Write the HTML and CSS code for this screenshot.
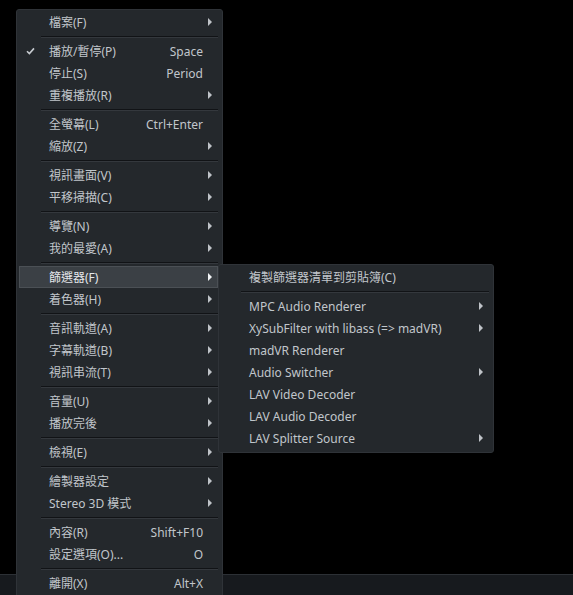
FILE: index.html
```html
<!DOCTYPE html>
<html>
<head>
<meta charset="utf-8">
<link rel="stylesheet" href="styles.css">
</head>
<body>
<div class="screen">
  <div class="statusbar"></div>

  <div class="menu main">
    <div class="item"><span class="label">檔案(F)</span><span class="arrow"></span></div>
    <div class="sep"></div>
    <div class="item"><span class="check"><svg width="9" height="8" viewBox="0 0 9 8"><path d="M1 4.2 L3.4 6.6 L8 1.4" fill="none" stroke="#c6cacf" stroke-width="1.6"/></svg></span><span class="label">播放/暫停(P)</span><span class="key">Space</span></div>
    <div class="item"><span class="label">停止(S)</span><span class="key">Period</span></div>
    <div class="item"><span class="label">重複播放(R)</span><span class="arrow"></span></div>
    <div class="sep"></div>
    <div class="item"><span class="label">全螢幕(L)</span><span class="key">Ctrl+Enter</span></div>
    <div class="item"><span class="label">縮放(Z)</span><span class="arrow"></span></div>
    <div class="sep"></div>
    <div class="item"><span class="label">視訊畫面(V)</span><span class="arrow"></span></div>
    <div class="item"><span class="label">平移掃描(C)</span><span class="arrow"></span></div>
    <div class="sep"></div>
    <div class="item"><span class="label">導覽(N)</span><span class="arrow"></span></div>
    <div class="item"><span class="label">我的最愛(A)</span><span class="arrow"></span></div>
    <div class="sep"></div>
    <div class="item active"><span class="label">篩選器(F)</span><span class="arrow"></span></div>
    <div class="item"><span class="label">着色器(H)</span><span class="arrow"></span></div>
    <div class="sep"></div>
    <div class="item"><span class="label">音訊軌道(A)</span><span class="arrow"></span></div>
    <div class="item"><span class="label">字幕軌道(B)</span><span class="arrow"></span></div>
    <div class="item"><span class="label">視訊串流(T)</span><span class="arrow"></span></div>
    <div class="sep"></div>
    <div class="item"><span class="label">音量(U)</span><span class="arrow"></span></div>
    <div class="item"><span class="label">播放完後</span><span class="arrow"></span></div>
    <div class="sep"></div>
    <div class="item"><span class="label">檢視(E)</span><span class="arrow"></span></div>
    <div class="sep"></div>
    <div class="item"><span class="label">繪製器設定</span><span class="arrow"></span></div>
    <div class="item"><span class="label">Stereo 3D 模式</span><span class="arrow"></span></div>
    <div class="sep"></div>
    <div class="item"><span class="label">內容(R)</span><span class="key">Shift+F10</span></div>
    <div class="item"><span class="label">設定選項(O)...</span><span class="key">O</span></div>
    <div class="sep"></div>
    <div class="item"><span class="label">離開(X)</span><span class="key">Alt+X</span></div>
  </div>

  <div class="menu sub">
    <div class="item"><span class="label">複製篩選器清單到剪貼簿(C)</span></div>
    <div class="sep"></div>
    <div class="item"><span class="label">MPC Audio Renderer</span><span class="arrow"></span></div>
    <div class="item"><span class="label">XySubFilter with libass (=&gt; madVR)</span><span class="arrow"></span></div>
    <div class="item"><span class="label">madVR Renderer</span></div>
    <div class="item"><span class="label">Audio Switcher</span><span class="arrow"></span></div>
    <div class="item"><span class="label">LAV Video Decoder</span></div>
    <div class="item"><span class="label">LAV Audio Decoder</span></div>
    <div class="item"><span class="label">LAV Splitter Source</span><span class="arrow"></span></div>
  </div>
</div>
</body>
</html>
```

FILE: styles.css
```css
* { box-sizing: border-box; }
html, body {
  margin: 0;
  padding: 0;
  background: #000;
}
.screen {
  position: relative;
  width: 573px;
  height: 595px;
  overflow: hidden;
  background: #000;
  font-family: "Noto Sans", "Noto Sans CJK TC", sans-serif;
  font-size: 12px;
  color: #c1c6cb;
}
.statusbar {
  position: absolute;
  left: 0;
  right: 0;
  top: 574px;
  bottom: 0;
  background: #171a1e;
  border-top: 1px solid #2c3035;
}
.menu {
  position: absolute;
  background: #24282c;
  border: 1px solid #2f3338;
  border-radius: 3px;
  padding: 1px 4px 2px 2px;
  display: flex;
  flex-direction: column;
}
.main {
  left: 16px;
  top: 9px;
  width: 207px;
  height: 600px;
}
.sub {
  left: 218px;
  top: 264px;
  width: 276px;
  height: 189px;
}
.item {
  position: relative;
  height: 22px;
  display: flex;
  align-items: center;
  padding-left: 29px;
  padding-right: 12px;
  white-space: nowrap;
  border: 1px solid transparent;
}
.sub .item { padding-left: 27px; }
.item.active {
  background: #3b4045;
  border-color: #4b5055;
  color: #e4e7ea;
}
.label { flex: 1; }
.key { margin-right: 2px; }
.check {
  position: absolute;
  left: 6px;
  top: 6px;
  display: flex;
}
.arrow {
  width: 0;
  height: 0;
  border-top: 4px solid transparent;
  border-bottom: 4px solid transparent;
  border-left: 4px solid #bfc3c8;
  margin-right: -7px;
}
.active .arrow { border-left-color: #f2f4f6; }
.sep {
  height: 7px;
  margin-left: 22px;
  display: flex;
  flex-direction: column;
  justify-content: center;
}
.sub .sep { margin-left: 20px; }
.sep::before {
  content: "";
  display: block;
  height: 1px;
  background: #111316;
}
.sep::after {
  content: "";
  display: block;
  height: 1px;
  background: #34383d;
}
```
